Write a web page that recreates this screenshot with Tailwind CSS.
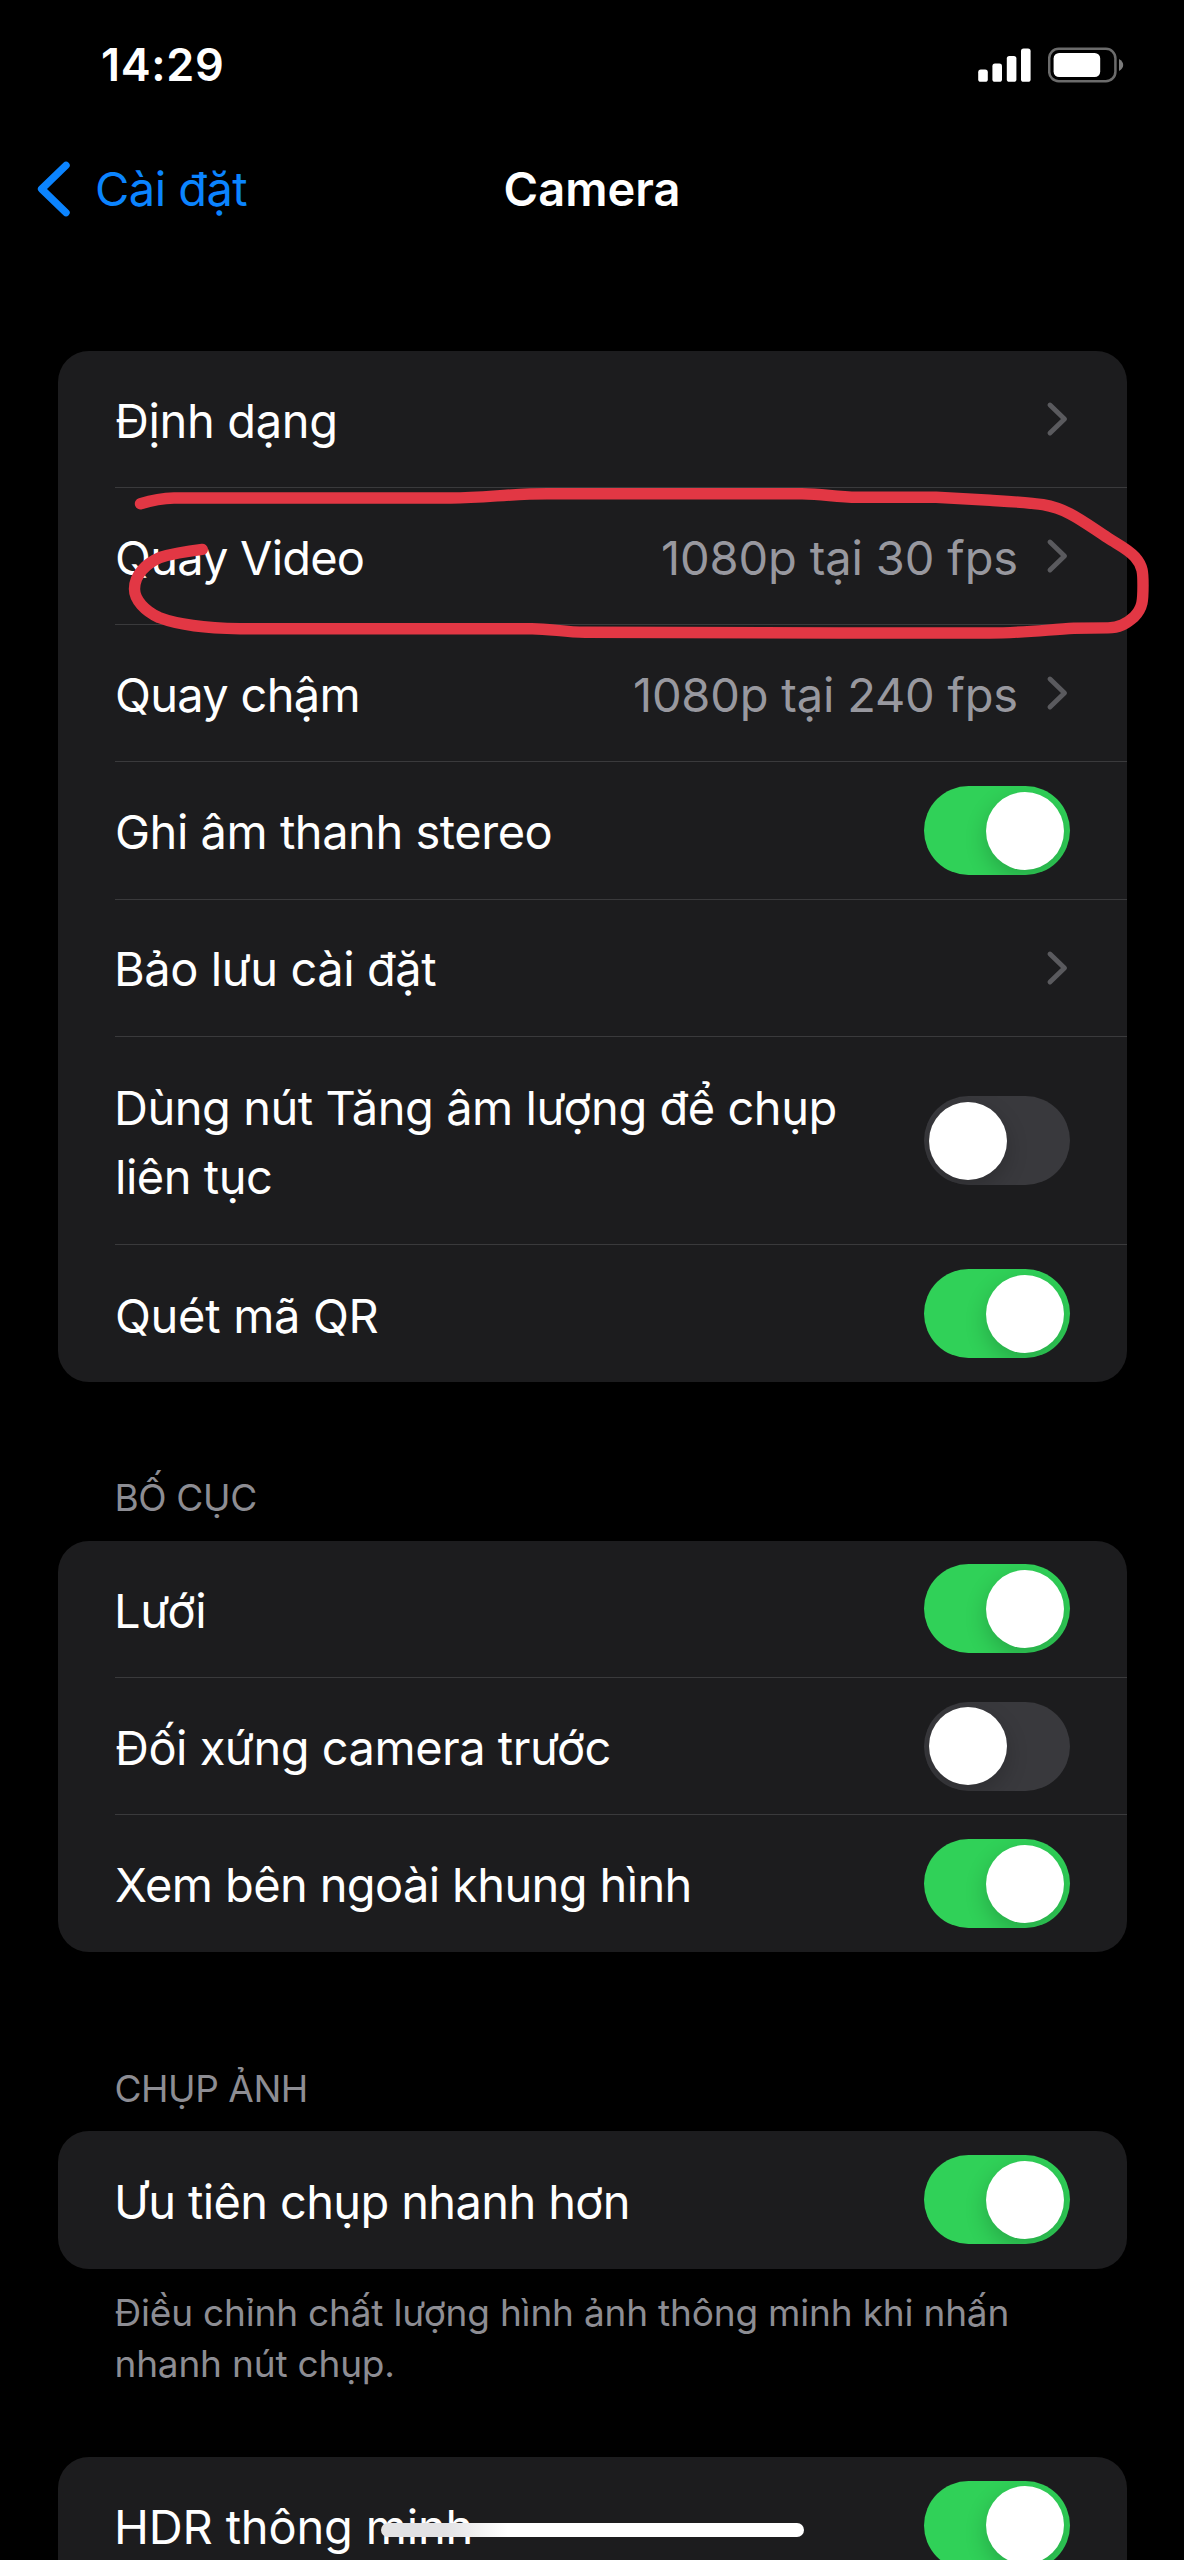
<!DOCTYPE html>
<html lang="vi">
<head>
<meta charset="utf-8">
<meta name="viewport" content="width=device-width">
<title>Camera</title>
<script src="https://cdn.jsdelivr.net/npm/@tailwindcss/browser@4"></script>
</head>
<body class="bg-black">
<svg class="hidden">
  <symbol id="chevron" viewBox="0 0 22 36"><path d="M4 4 L18.5 18 L4 32" fill="none" stroke="currentColor" stroke-width="4.9" stroke-linecap="round" stroke-linejoin="round"/></symbol>
</svg>
<div class="relative flex h-[2560px] w-[1184px] flex-col overflow-hidden bg-black font-['Inter',sans-serif] text-[47px] leading-[69.5px] text-white">

  <!-- Status bar -->
  <header class="flex h-[129px] shrink-0 items-center justify-between pr-[60px] pl-[101px]">
    <span class="text-[45px] leading-none font-semibold tracking-[0.65px]">14:29</span>
    <div class="flex items-center gap-[17px]">
      <svg class="h-[34px] w-[53px]" viewBox="0 0 53 34" fill="#fff">
        <rect x="0.2" y="21.6" width="9.6" height="12.2" rx="2.6"/>
        <rect x="14.4" y="15.6" width="9.6" height="18.2" rx="2.6"/>
        <rect x="28.8" y="8" width="9.6" height="25.8" rx="2.6"/>
        <rect x="43" y="0.6" width="9.6" height="33.2" rx="2.6"/>
      </svg>
      <svg class="h-[36px] w-[76px]" viewBox="0 0 76 36">
        <rect x="1.2" y="1.8" width="66.2" height="32.4" rx="9.5" fill="none" stroke="#6b6b6b" stroke-width="2.5"/>
        <rect x="5.6" y="6" width="46.6" height="24" rx="5.5" fill="#fff"/>
        <path d="M71 12 Q75.2 14.4 75.2 18 Q75.2 21.6 71 24Z" fill="#7b7b7b"/>
      </svg>
    </div>
  </header>

  <!-- Navigation bar -->
  <nav class="grid h-[120px] shrink-0 grid-cols-[1fr_auto_1fr] items-center pl-[36px]">
    <div class="flex items-center gap-[23px] text-[#0b84ff]">
      <svg class="h-[56px] w-[36px]" viewBox="0 0 36 56"><path d="M30 4.4 L5.6 28 L30 51.6" fill="none" stroke="currentColor" stroke-width="7.4" stroke-linecap="round" stroke-linejoin="round"/></svg>
      <span class="tracking-[-0.54px]">Cài đặt</span>
    </div>
    <h1 class="-translate-x-[18px] font-semibold">Camera</h1>
  </nav>

  <main class="shrink-0 px-[57.5px] pt-[102.2px]">
    <section class="rounded-[31px] bg-[#1c1c1e] pl-[57.5px]">
      <div class="flex h-[137.1px] items-center border-b border-[#3a3a3c] pr-[58.5px]">
        <span class="grow pt-[3px] tracking-[-0.35px]">Định dạng</span>
        <svg class="h-[36px] w-[22px] text-[#5a5a5e]"><use href="#chevron"/></svg>
      </div>
      <div class="flex h-[137.1px] items-center border-b border-[#3a3a3c] pr-[58.5px]">
        <span class="grow pt-[3px] tracking-[-0.8px]">Quay Video</span>
        <span class="pt-[3px] pr-[28px] tracking-[-0.12px] text-[#98989f]">1080p tại 30 fps</span>
        <svg class="h-[36px] w-[22px] text-[#5a5a5e]"><use href="#chevron"/></svg>
      </div>
      <div class="flex h-[137.1px] items-center border-b border-[#3a3a3c] pr-[58.5px]">
        <span class="grow pt-[3px] tracking-[-0.7px]">Quay chậm</span>
        <span class="pt-[3px] pr-[28px] tracking-[-0.19px] text-[#98989f]">1080p tại 240 fps</span>
        <svg class="h-[36px] w-[22px] text-[#5a5a5e]"><use href="#chevron"/></svg>
      </div>
      <div class="flex h-[137.1px] items-center border-b border-[#3a3a3c] pr-[57px]">
        <span class="grow pt-[3px] tracking-[-0.47px]">Ghi âm thanh stereo</span>
        <span class="flex h-[89px] w-[146px] justify-end overflow-hidden rounded-full bg-[#30d158] p-[5.5px]"><span class="size-[78px] rounded-full bg-white shadow-[0_8px_22px_rgba(0,0,0,0.2)]"></span></span>
      </div>
      <div class="flex h-[137.1px] items-center border-b border-[#3a3a3c] pr-[58.5px]">
        <span class="grow -indent-px pt-[3px] tracking-[-0.45px]">Bảo lưu cài đặt</span>
        <svg class="h-[36px] w-[22px] text-[#5a5a5e]"><use href="#chevron"/></svg>
      </div>
      <div class="flex h-[208.7px] items-center border-b border-[#3a3a3c] pr-[57px]">
        <span class="grow -indent-px pt-[3px] tracking-[-0.47px]">Dùng nút Tăng âm lượng để chụp<br>liên tục</span>
        <span class="flex h-[89px] w-[146px] overflow-hidden rounded-full bg-[#39393d] p-[5.5px]"><span class="size-[78px] rounded-full bg-white shadow-[0_8px_22px_rgba(0,0,0,0.2)]"></span></span>
      </div>
      <div class="flex h-[137.1px] items-center pr-[57px]">
        <span class="grow pt-[3px] tracking-[-0.32px]">Quét mã QR</span>
        <span class="flex h-[89px] w-[146px] justify-end overflow-hidden rounded-full bg-[#30d158] p-[5.5px]"><span class="size-[78px] rounded-full bg-white shadow-[0_8px_22px_rgba(0,0,0,0.2)]"></span></span>
      </div>
    </section>

    <h2 class="mt-[91px] mb-[17.5px] pl-[57px] text-[37px] leading-[50px] tracking-[-0.35px] text-[#8d8d93]">BỐ CỤC</h2>
    <section class="rounded-[31px] bg-[#1c1c1e] pl-[57.5px]">
      <div class="flex h-[137.1px] items-center border-b border-[#3a3a3c] pr-[57px]">
        <span class="grow -indent-px pt-[3px] tracking-[-0.3px]">Lưới</span>
        <span class="flex h-[89px] w-[146px] justify-end overflow-hidden rounded-full bg-[#30d158] p-[5.5px]"><span class="size-[78px] rounded-full bg-white shadow-[0_8px_22px_rgba(0,0,0,0.2)]"></span></span>
      </div>
      <div class="flex h-[137.1px] items-center border-b border-[#3a3a3c] pr-[57px]">
        <span class="grow pt-[3px] tracking-[-0.5px]">Đối xứng camera trước</span>
        <span class="flex h-[89px] w-[146px] overflow-hidden rounded-full bg-[#39393d] p-[5.5px]"><span class="size-[78px] rounded-full bg-white shadow-[0_8px_22px_rgba(0,0,0,0.2)]"></span></span>
      </div>
      <div class="flex h-[137.1px] items-center pr-[57px]">
        <span class="grow pt-[3px] tracking-[-0.63px]">Xem bên ngoài khung hình</span>
        <span class="flex h-[89px] w-[146px] justify-end overflow-hidden rounded-full bg-[#30d158] p-[5.5px]"><span class="size-[78px] rounded-full bg-white shadow-[0_8px_22px_rgba(0,0,0,0.2)]"></span></span>
      </div>
    </section>

    <h2 class="mt-[112.2px] mb-[17px] pl-[57px] text-[37px] leading-[50px] tracking-[-0.45px] text-[#8d8d93]">CHỤP ẢNH</h2>
    <section class="rounded-[31px] bg-[#1c1c1e] pl-[57.5px]">
      <div class="flex h-[137.1px] items-center pr-[57px]">
        <span class="grow -indent-px pt-[3px] tracking-[-0.63px]">Ưu tiên chụp nhanh hơn</span>
        <span class="flex h-[89px] w-[146px] justify-end overflow-hidden rounded-full bg-[#30d158] p-[5.5px]"><span class="size-[78px] rounded-full bg-white shadow-[0_8px_22px_rgba(0,0,0,0.2)]"></span></span>
      </div>
    </section>
    <p class="mt-[19.8px] mb-[68.2px] pl-[57px] text-[37px] leading-[50.3px] tracking-[-0.19px] text-[#8d8d93]">Điều chỉnh chất lượng hình ảnh thông minh khi nhấn<br>nhanh nút chụp.</p>

    <section class="rounded-t-[31px] bg-[#1c1c1e] pl-[57.5px]">
      <div class="flex h-[137.1px] items-center border-b border-[#3a3a3c] pr-[57px]">
        <span class="grow -indent-px pt-[3px] tracking-[-0.17px]">HDR thông minh</span>
        <span class="flex h-[89px] w-[146px] justify-end overflow-hidden rounded-full bg-[#30d158] p-[5.5px]"><span class="size-[78px] rounded-full bg-white shadow-[0_8px_22px_rgba(0,0,0,0.2)]"></span></span>
      </div>
    </section>
  </main>

  <!-- Hand-drawn marker around the video row -->
  <svg class="absolute top-[480px] left-[120px] h-[170px] w-[1040px]" viewBox="120 480 1040 170">
    <path d="M140.5 503.7 Q158 498.3 174 498 L451 498 C485 498 510 493.7 547 493.7 L802 493.7 C825 494 835 497.3 858 497.3 L936 497.3 L990 500.3 C1010 501.5 1030 502.5 1043 504.7 C1068 509 1082 521 1108 538 C1117 544 1128 549 1135 557 C1143 566 1143 573 1143 585 C1143 600 1143 608 1134 617 C1126 624 1119 627.9 1108 627.9 L1074 628.2 C1045 630 1020 633 990 633 L840 633 L585 632.3 C565 632.3 550 628.7 532 628.7 L240 628.7 C205 628 180 625.5 159 617.5 C145 611 134.5 600 134.5 589 C134.5 574 147 563 160 557.5 Q176 552.5 202.3 549.4" fill="none" stroke="#e23744" stroke-width="11.4" stroke-linecap="round" stroke-linejoin="round"/>
  </svg>

  <!-- Home indicator -->
  <div class="absolute top-[2522.5px] left-[381px] h-[14.5px] w-[423px] rounded-full bg-linear-to-r from-[#e2e2e4] from-15% to-white to-30%"></div>
</div>
</body>
</html>
